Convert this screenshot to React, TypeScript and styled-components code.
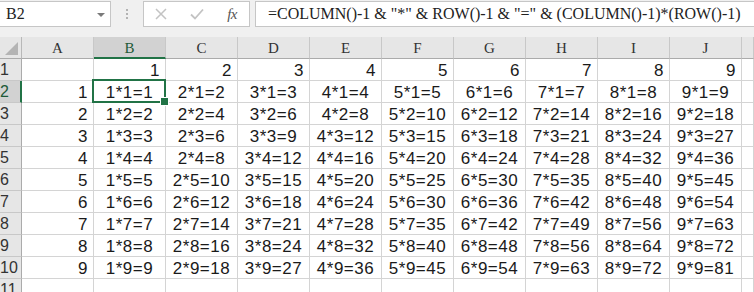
import React from "react";
import styled, { createGlobalStyle, css } from "styled-components";

const GREEN = "#217346";

const Global = createGlobalStyle`
  html, body { margin: 0; padding: 0; background: #ffffff; overflow: hidden; }
  * { box-sizing: border-box; }
`;

const Page = styled.div`
  width: 754px;
  height: 292px;
  overflow: hidden;
  background: #ffffff;
`;

const Toolbar = styled.div`
  height: 37px;
  background: #f0f0f0;
  display: flex;
  align-items: flex-start;
  padding-top: 1px;
`;

const NameBox = styled.div`
  width: 111px;
  height: 26px;
  background: #fff;
  border: 1px solid #c6c6c6;
  border-left: none;
  display: flex;
  align-items: center;
  justify-content: space-between;
  padding: 0 5px 0 6px;
  font-family: "Liberation Serif", serif;
  font-size: 16px;
  color: #222;
`;

const Caret = styled.span`
  width: 0;
  height: 0;
  border-left: 4px solid transparent;
  border-right: 4px solid transparent;
  border-top: 4px solid #7a7a7a;
  margin-top: 1px;
`;

const Grip = styled.div`
  width: 32px;
  height: 26px;
  display: flex;
  flex-direction: column;
  align-items: center;
  justify-content: center;
  gap: 2px;
  & > span {
    width: 2px;
    height: 2px;
    background: #b3b3b3;
  }
`;

const ButtonsBox = styled.div`
  width: 107px;
  height: 26px;
  background: #fff;
  border: 1px solid #c6c6c6;
  display: flex;
  align-items: center;
  justify-content: space-between;
  padding: 0 12px 0 11px;
`;

const Fx = styled.span`
  font-family: "Liberation Serif", serif;
  font-style: italic;
  font-size: 15px;
  color: #555;
  letter-spacing: -0.5px;
`;

const FormulaInput = styled.div`
  flex: 1;
  margin-left: 5px;
  height: 26px;
  background: #fff;
  border: 1px solid #c6c6c6;
  border-right: none;
  display: flex;
  align-items: center;
  padding-left: 12px;
  font-family: "Liberation Serif", serif;
  font-size: 16px;
  color: #222;
  white-space: nowrap;
  overflow: hidden;
`;

const Sheet = styled.div`
  display: grid;
  grid-template-columns: 22px repeat(10, 72px) 1fr;
  grid-auto-rows: 22px;
`;

const Corner = styled.div`
  background: #e6e6e6;
  border-right: 1px solid #b8b8b8;
  border-bottom: 1px solid #ababab;
  position: relative;
  &::after {
    content: "";
    position: absolute;
    right: 3px;
    bottom: 3px;
    width: 0;
    height: 0;
    border-left: 13px solid transparent;
    border-bottom: 13px solid #b4b4b4;
  }
`;

const ColHead = styled.div<{ $sel?: boolean }>`
  background: #e6e6e6;
  border-right: 1px solid #c8c8c8;
  border-bottom: 1px solid #ababab;
  display: flex;
  align-items: center;
  justify-content: center;
  font-family: "Liberation Serif", serif;
  font-size: 15px;
  color: #333;
  padding-top: 2px;
  ${(p) =>
    p.$sel &&
    css`
      background: #d2d2d2;
      border-bottom: 2px solid ${GREEN};
      color: #1e5a38;
    `}
`;

const RowHead = styled.div<{ $sel?: boolean }>`
  background: #e6e6e6;
  border-right: 1px solid #ababab;
  border-bottom: 1px solid #c8c8c8;
  display: flex;
  align-items: center;
  padding-left: 0px;
  font-family: "Liberation Sans", sans-serif;
  font-size: 16px;
  color: #333;
  padding-top: 1px;
  ${(p) =>
    p.$sel &&
    css`
      background: #d2d2d2;
      border-right: 2px solid ${GREEN};
      color: #1e5a38;
    `}
`;

const Cell = styled.div<{ $align: "left" | "center" | "right"; $sel?: boolean }>`
  position: relative;
  border-right: 1px solid #d4d4d4;
  border-bottom: 1px solid #d4d4d4;
  display: flex;
  align-items: center;
  padding: 2px 5px 0 5px;
  font-family: "Liberation Sans", sans-serif;
  font-size: 17px;
  letter-spacing: 0.5px;
  color: #1a1a1a;
  white-space: nowrap;
  justify-content: ${(p) =>
    p.$align === "right" ? "flex-end" : p.$align === "center" ? "center" : "flex-start"};
  ${(p) =>
    p.$sel &&
    css`
      z-index: 2;
      &::before {
        content: "";
        position: absolute;
        left: -2px;
        top: -2px;
        right: -1px;
        bottom: -1px;
        border: 2px solid ${GREEN};
        pointer-events: none;
      }
      &::after {
        content: "";
        position: absolute;
        right: -4px;
        bottom: -4px;
        width: 7px;
        height: 7px;
        background: ${GREEN};
        border: 1px solid #fff;
      }
    `}
`;

const COLS = ["A", "B", "C", "D", "E", "F", "G", "H", "I", "J"];

function cellContent(r: number, c: number): { text: string; align: "left" | "center" | "right" } {
  if (r === 1) {
    if (c === 0) return { text: "", align: "left" };
    return { text: String(c), align: "right" };
  }
  if (r >= 2 && r <= 10) {
    if (c === 0) return { text: String(r - 1), align: "right" };
    return { text: `${c}*${r - 1}=${c * (r - 1)}`, align: "center" };
  }
  return { text: "", align: "left" };
}

export default function App() {
  const rows = Array.from({ length: 11 }, (_, i) => i + 1);
  return (
    <Page>
      <Global />
      <Toolbar>
        <NameBox>
          <span>B2</span>
          <Caret />
        </NameBox>
        <Grip>
          <span />
          <span />
          <span />
        </Grip>
        <ButtonsBox>
          <svg width="12" height="12" viewBox="0 0 12 12">
            <path d="M1 1 L11 11 M11 1 L1 11" stroke="#c3c3c3" strokeWidth="1.5" fill="none" />
          </svg>
          <svg width="14" height="12" viewBox="0 0 14 12">
            <path d="M1 6.5 L5 10.5 L13 1.5" stroke="#c3c3c3" strokeWidth="1.8" fill="none" />
          </svg>
          <Fx>fx</Fx>
        </ButtonsBox>
        <FormulaInput>=COLUMN()-1 &amp; "*" &amp; ROW()-1 &amp; "=" &amp; (COLUMN()-1)*(ROW()-1)</FormulaInput>
      </Toolbar>
      <Sheet>
        <Corner />
        {COLS.map((c) => (
          <ColHead key={c} $sel={c === "B"}>
            {c}
          </ColHead>
        ))}
        <ColHead />
        {rows.map((r) => (
          <React.Fragment key={r}>
            <RowHead $sel={r === 2}>{r}</RowHead>
            {COLS.map((col, ci) => {
              const { text, align } = cellContent(r, ci);
              return (
                <Cell key={col} $align={align} $sel={r === 2 && ci === 1}>
                  {text}
                </Cell>
              );
            })}
            <Cell $align="left" />
          </React.Fragment>
        ))}
      </Sheet>
    </Page>
  );
}
